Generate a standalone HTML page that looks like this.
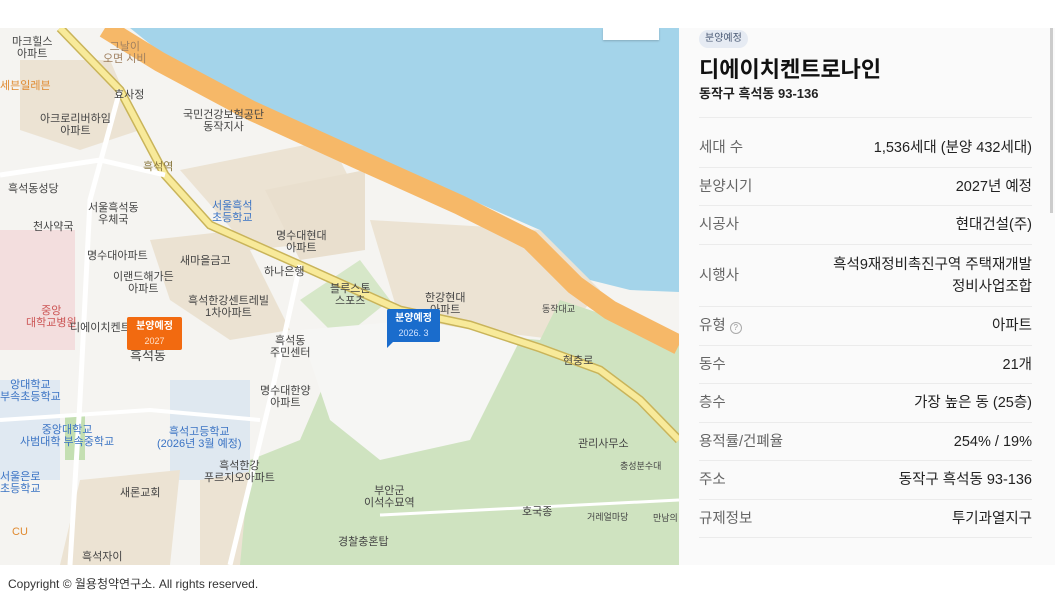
<!DOCTYPE html>
<html><head><meta charset="utf-8"><style>
*{margin:0;padding:0;box-sizing:border-box}
body{width:1055px;height:593px;background:#fff;position:relative;overflow:hidden;font-family:"Liberation Sans","Noto Sans CJK KR",sans-serif}
#map{position:absolute;left:0;top:28px;width:679px;height:537px;overflow:hidden;background:#f4f3f0}
#panel{position:absolute;left:679px;top:28px;width:376px;height:537px;background:#fafafa}
.badge{position:absolute;left:20px;top:2px;height:18px;padding:0 6px;border-radius:9px;background:#e6ebf3;color:#4a5a75;font-size:10px;line-height:18px}
.title{position:absolute;left:20px;top:24px;font-size:22px;font-weight:bold;color:#111}
.sub{position:absolute;left:20px;top:55px;font-size:13px;font-weight:bold;color:#222}
.row{position:absolute;left:20px;width:333px;border-top:1px solid #ebebeb;display:flex;justify-content:space-between;align-items:center;font-size:14.5px}
.row .l{color:#666;line-height:22px;display:block}.row .v{color:#222;text-align:right;line-height:22px;display:block}
.foot{position:absolute;left:8px;top:575px;font-size:12px;color:#333}
.scroll{position:absolute;left:1050px;top:28px;width:3px;height:185px;background:#ccc}
.lbl{position:absolute;font-size:11px;color:#444;white-space:nowrap;text-align:center;line-height:12px}
</style></head><body>
<div id="map">
<svg width="679" height="537" viewBox="0 28 679 537">
<rect x="0" y="28" width="679" height="537" fill="#f5f4f1"/>
<polygon points="20,60 110,60 140,130 80,150 20,130" fill="#ece3d3"/>
<polygon points="180,170 330,140 360,200 345,240 250,250" fill="#ece3d3"/>
<polygon points="265,190 365,170 365,250 300,260" fill="#e9dfce"/>
<polygon points="370,220 540,230 600,290 560,340 400,320" fill="#ece3d3"/>
<polygon points="150,240 240,230 290,330 230,340 170,300" fill="#ebe2d2"/>
<polygon points="170,380 250,380 250,480 170,480" fill="#dfe8f0"/>
<polygon points="80,480 180,470 170,565 60,565" fill="#ece3d3"/>
<polygon points="200,480 260,470 280,565 200,565" fill="#ece3d3"/>
<polygon points="0,230 75,230 75,350 0,350" fill="#f3dede"/>
<polygon points="0,380 60,380 60,480 0,480" fill="#e0e9f2"/>
<polygon points="330,370 430,330 540,340 560,300 679,340 679,565 240,565 250,460 300,440" fill="#cfe3c0"/>
<polygon points="300,300 360,260 390,300 340,340" fill="#d6e7c8"/>
<polygon points="290,50 360,60 320,120 270,110" fill="#d6e7c8"/>
<polygon points="300,330 420,320 520,340 470,440 380,460 330,420" fill="#f6f6f4"/>
<rect x="65" y="415" width="20" height="45" fill="#c4dfb2"/>
<polygon points="130,28 679,28 679,292 630,290 590,280 540,230 460,195 360,150 250,100 170,60" fill="#a4d4ea"/>
<polyline points="105,28 160,62 250,110 360,160 460,205 530,240 575,285 610,310 679,345" fill="none" stroke="#f6b868" stroke-width="20"/>
<polyline points="60,28 120,90 165,175 210,225 300,265 400,310 470,325 540,348 600,370 640,400 679,440" fill="none" stroke="#c9b45a" stroke-width="9"/>
<polyline points="60,28 120,90 165,175 210,225 300,265 400,310 470,325 540,348 600,370 640,400 679,440" fill="none" stroke="#f8ea9a" stroke-width="6"/>
<polyline points="0,175 100,160 165,175" fill="none" stroke="#fff" stroke-width="5"/>
<polyline points="120,90 90,200 80,400 70,565" fill="none" stroke="#fff" stroke-width="5"/>
<polyline points="300,265 270,400 230,565" fill="none" stroke="#fff" stroke-width="5"/>
<polyline points="0,420 150,410 260,420" fill="none" stroke="#fff" stroke-width="4"/>
<polyline points="380,515 679,500" fill="none" stroke="#fff" stroke-width="3"/>
</svg>
<div class="lbl" style="left:12px;top:8px">마크힐스<br>아파트</div>
<div class="lbl" style="left:103px;top:13px;color:#a08060">그날이<br>오면 시비</div>
<div class="lbl" style="left:114px;top:61px">효사정</div>
<div class="lbl" style="left:0;top:52px;color:#e08a30">세븐일레븐</div>
<div class="lbl" style="left:40px;top:85px">아크로리버하임<br>아파트</div>
<div class="lbl" style="left:183px;top:81px">국민건강보험공단<br>동작지사</div>
<div class="lbl" style="left:143px;top:133px;color:#8a7840">흑석역</div>
<div class="lbl" style="left:8px;top:155px">흑석동성당</div>
<div class="lbl" style="left:88px;top:174px">서울흑석동<br>우체국</div>
<div class="lbl" style="left:33px;top:193px">천사약국</div>
<div class="lbl" style="left:212px;top:172px;color:#3a73c4">서울흑석<br>초등학교</div>
<div class="lbl" style="left:276px;top:202px">명수대현대<br>아파트</div>
<div class="lbl" style="left:87px;top:222px">명수대아파트</div>
<div class="lbl" style="left:180px;top:227px">새마을금고</div>
<div class="lbl" style="left:264px;top:238px">하나은행</div>
<div class="lbl" style="left:113px;top:243px">이랜드해가든<br>아파트</div>
<div class="lbl" style="left:26px;top:277px;color:#c55">중앙<br>대학교병원</div>
<div class="lbl" style="left:330px;top:255px">블루스톤<br>스포츠</div>
<div class="lbl" style="left:425px;top:264px">한강현대<br>아파트</div>
<div class="lbl" style="left:188px;top:267px">흑석한강센트레빌<br>1차아파트</div>
<div class="lbl" style="left:542px;top:275px;font-size:9px">동작대교</div>
<div class="lbl" style="left:70px;top:294px">디에이치켄트로나인</div>
<div class="lbl" style="left:270px;top:307px">흑석동<br>주민센터</div>
<div class="lbl" style="left:130px;top:322px;font-size:13px">흑석동</div>
<div class="lbl" style="left:563px;top:327px">현충로</div>
<div class="lbl" style="left:0;top:351px;color:#3a73c4">앙대학교<br>부속초등학교</div>
<div class="lbl" style="left:260px;top:357px">명수대한양<br>아파트</div>
<div class="lbl" style="left:20px;top:396px;color:#3a73c4">중앙대학교<br>사범대학 부속중학교</div>
<div class="lbl" style="left:157px;top:398px;color:#3a73c4">흑석고등학교<br>(2026년 3월 예정)</div>
<div class="lbl" style="left:578px;top:410px">관리사무소</div>
<div class="lbl" style="left:620px;top:432px;font-size:9px">충성분수대</div>
<div class="lbl" style="left:0;top:443px;color:#3a73c4">서울은로<br>초등학교</div>
<div class="lbl" style="left:204px;top:432px">흑석한강<br>푸르지오아파트</div>
<div class="lbl" style="left:120px;top:459px">새론교회</div>
<div class="lbl" style="left:364px;top:457px">부안군<br>이석수묘역</div>
<div class="lbl" style="left:522px;top:478px">호국종</div>
<div class="lbl" style="left:587px;top:483px;font-size:9px">거레얼마당</div>
<div class="lbl" style="left:653px;top:484px;font-size:9px">만남의</div>
<div class="lbl" style="left:12px;top:498px;color:#e08a30">CU</div>
<div class="lbl" style="left:338px;top:508px">경찰충혼탑</div>
<div class="lbl" style="left:82px;top:523px">흑석자이</div>
<div style="position:absolute;left:603px;top:0;width:56px;height:12px;background:#fff;box-shadow:0 1px 2px rgba(0,0,0,.2)"></div>
<div style="position:absolute;left:127px;top:289px;width:55px;height:33px;background:#f26a10;border-radius:2px;color:#fff;text-align:center;font-size:10px;line-height:15px;padding-top:2px"><b>분양예정</b><br><span style="font-size:9px;color:#ffe0c8">2027</span></div>
<div style="position:absolute;left:387px;top:281px;width:53px;height:33px;background:#1a6ccc;border-radius:2px;color:#fff;text-align:center;font-size:10px;line-height:15px;padding-top:2px"><b>분양예정</b><br><span style="font-size:9px;color:#d0e2ff">2026. 3</span></div>
<div style="position:absolute;left:387px;top:312px;width:0;height:0;border-left:8px solid #1a6ccc;border-bottom:8px solid transparent"></div>
</div>
<div id="panel">
<div class="badge">분양예정</div>
<div class="title">디에이치켄트로나인</div>
<div class="sub">동작구 흑석동 93-136</div>
<div class="row" style="top:89px;height:11px;border-top:1px solid #ececec"></div>
<div class="row" style="top:100px;height:39px;border-top:none"><span class="l">세대 수</span><span class="v">1,536세대 (분양 432세대)</span></div>
<div class="row" style="top:139px;height:39px"><span class="l">분양시기</span><span class="v">2027년 예정</span></div>
<div class="row" style="top:177px;height:39px"><span class="l">시공사</span><span class="v">현대건설(주)</span></div>
<div class="row" style="top:216px;height:62px"><span class="l">시행사</span><span class="v">흑석9재정비촉진구역 주택재개발<br>정비사업조합</span></div>
<div class="row" style="top:278px;height:39px"><span class="l">유형 <span style="display:inline-block;width:12px;height:12px;border:1px solid #aaa;border-radius:50%;font-size:8px;line-height:10px;text-align:center;color:#999;vertical-align:0">?</span></span><span class="v">아파트</span></div>
<div class="row" style="top:317px;height:39px"><span class="l">동수</span><span class="v">21개</span></div>
<div class="row" style="top:355px;height:39px"><span class="l">층수</span><span class="v">가장 높은 동 (25층)</span></div>
<div class="row" style="top:394px;height:39px"><span class="l">용적률/건폐율</span><span class="v">254% / 19%</span></div>
<div class="row" style="top:432px;height:39px"><span class="l">주소</span><span class="v">동작구 흑석동 93-136</span></div>
<div class="row" style="top:471px;height:39px;border-bottom:1px solid #ebebeb"><span class="l">규제정보</span><span class="v">투기과열지구</span></div>
</div>
<div class="scroll"></div>
<div class="foot">Copyright © 월용청약연구소. All rights reserved.</div>
</body></html>
